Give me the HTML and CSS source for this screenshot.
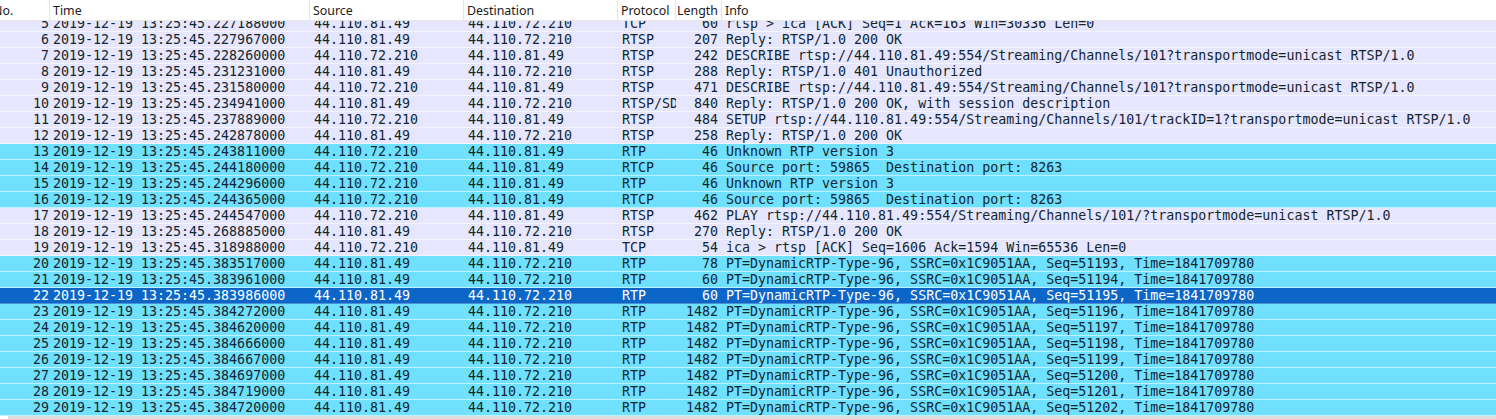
FILE: index.html
```html
<!DOCTYPE html>
<html>
<head>
<meta charset="utf-8">
<link rel="stylesheet" href="styles.css">
</head>
<body>
<div class="pane">
  <div class="head">
    <div class="hc c-no">No.</div>
    <div class="hc c-time">Time</div>
    <div class="hc c-src">Source</div>
    <div class="hc c-dst">Destination</div>
    <div class="hc c-proto">Protocol</div>
    <div class="hc c-len">Length</div>
    <div class="hc c-info">Info</div>
  </div>
  <div class="viewport">
    <div class="list">
      <div class="row tcp"><span class="c-no">5</span><span class="c-time">2019-12-19 13:25:45.227188000</span><span class="c-src">44.110.81.49</span><span class="c-dst">44.110.72.210</span><span class="c-proto">TCP</span><span class="c-len">60</span><span class="c-info">rtsp &gt; ica [ACK] Seq=1 Ack=163 Win=30336 Len=0</span></div>
      <div class="row tcp"><span class="c-no">6</span><span class="c-time">2019-12-19 13:25:45.227967000</span><span class="c-src">44.110.81.49</span><span class="c-dst">44.110.72.210</span><span class="c-proto">RTSP</span><span class="c-len">207</span><span class="c-info">Reply: RTSP/1.0 200 OK</span></div>
      <div class="row tcp"><span class="c-no">7</span><span class="c-time">2019-12-19 13:25:45.228260000</span><span class="c-src">44.110.72.210</span><span class="c-dst">44.110.81.49</span><span class="c-proto">RTSP</span><span class="c-len">242</span><span class="c-info">DESCRIBE rtsp://44.110.81.49:554/Streaming/Channels/101?transportmode=unicast RTSP/1.0</span></div>
      <div class="row tcp"><span class="c-no">8</span><span class="c-time">2019-12-19 13:25:45.231231000</span><span class="c-src">44.110.81.49</span><span class="c-dst">44.110.72.210</span><span class="c-proto">RTSP</span><span class="c-len">288</span><span class="c-info">Reply: RTSP/1.0 401 Unauthorized</span></div>
      <div class="row tcp"><span class="c-no">9</span><span class="c-time">2019-12-19 13:25:45.231580000</span><span class="c-src">44.110.72.210</span><span class="c-dst">44.110.81.49</span><span class="c-proto">RTSP</span><span class="c-len">471</span><span class="c-info">DESCRIBE rtsp://44.110.81.49:554/Streaming/Channels/101?transportmode=unicast RTSP/1.0</span></div>
      <div class="row tcp"><span class="c-no">10</span><span class="c-time">2019-12-19 13:25:45.234941000</span><span class="c-src">44.110.81.49</span><span class="c-dst">44.110.72.210</span><span class="c-proto">RTSP/SDP</span><span class="c-len">840</span><span class="c-info">Reply: RTSP/1.0 200 OK, with session description</span></div>
      <div class="row tcp"><span class="c-no">11</span><span class="c-time">2019-12-19 13:25:45.237889000</span><span class="c-src">44.110.72.210</span><span class="c-dst">44.110.81.49</span><span class="c-proto">RTSP</span><span class="c-len">484</span><span class="c-info">SETUP rtsp://44.110.81.49:554/Streaming/Channels/101/trackID=1?transportmode=unicast RTSP/1.0</span></div>
      <div class="row tcp"><span class="c-no">12</span><span class="c-time">2019-12-19 13:25:45.242878000</span><span class="c-src">44.110.81.49</span><span class="c-dst">44.110.72.210</span><span class="c-proto">RTSP</span><span class="c-len">258</span><span class="c-info">Reply: RTSP/1.0 200 OK</span></div>
      <div class="row udp"><span class="c-no">13</span><span class="c-time">2019-12-19 13:25:45.243811000</span><span class="c-src">44.110.72.210</span><span class="c-dst">44.110.81.49</span><span class="c-proto">RTP</span><span class="c-len">46</span><span class="c-info">Unknown RTP version 3</span></div>
      <div class="row udp"><span class="c-no">14</span><span class="c-time">2019-12-19 13:25:45.244180000</span><span class="c-src">44.110.72.210</span><span class="c-dst">44.110.81.49</span><span class="c-proto">RTCP</span><span class="c-len">46</span><span class="c-info">Source port: 59865  Destination port: 8263</span></div>
      <div class="row udp"><span class="c-no">15</span><span class="c-time">2019-12-19 13:25:45.244296000</span><span class="c-src">44.110.72.210</span><span class="c-dst">44.110.81.49</span><span class="c-proto">RTP</span><span class="c-len">46</span><span class="c-info">Unknown RTP version 3</span></div>
      <div class="row udp"><span class="c-no">16</span><span class="c-time">2019-12-19 13:25:45.244365000</span><span class="c-src">44.110.72.210</span><span class="c-dst">44.110.81.49</span><span class="c-proto">RTCP</span><span class="c-len">46</span><span class="c-info">Source port: 59865  Destination port: 8263</span></div>
      <div class="row tcp"><span class="c-no">17</span><span class="c-time">2019-12-19 13:25:45.244547000</span><span class="c-src">44.110.72.210</span><span class="c-dst">44.110.81.49</span><span class="c-proto">RTSP</span><span class="c-len">462</span><span class="c-info">PLAY rtsp://44.110.81.49:554/Streaming/Channels/101/?transportmode=unicast RTSP/1.0</span></div>
      <div class="row tcp"><span class="c-no">18</span><span class="c-time">2019-12-19 13:25:45.268885000</span><span class="c-src">44.110.81.49</span><span class="c-dst">44.110.72.210</span><span class="c-proto">RTSP</span><span class="c-len">270</span><span class="c-info">Reply: RTSP/1.0 200 OK</span></div>
      <div class="row tcp"><span class="c-no">19</span><span class="c-time">2019-12-19 13:25:45.318988000</span><span class="c-src">44.110.72.210</span><span class="c-dst">44.110.81.49</span><span class="c-proto">TCP</span><span class="c-len">54</span><span class="c-info">ica &gt; rtsp [ACK] Seq=1606 Ack=1594 Win=65536 Len=0</span></div>
      <div class="row udp"><span class="c-no">20</span><span class="c-time">2019-12-19 13:25:45.383517000</span><span class="c-src">44.110.81.49</span><span class="c-dst">44.110.72.210</span><span class="c-proto">RTP</span><span class="c-len">78</span><span class="c-info">PT=DynamicRTP-Type-96, SSRC=0x1C9051AA, Seq=51193, Time=1841709780</span></div>
      <div class="row udp"><span class="c-no">21</span><span class="c-time">2019-12-19 13:25:45.383961000</span><span class="c-src">44.110.81.49</span><span class="c-dst">44.110.72.210</span><span class="c-proto">RTP</span><span class="c-len">60</span><span class="c-info">PT=DynamicRTP-Type-96, SSRC=0x1C9051AA, Seq=51194, Time=1841709780</span></div>
      <div class="row sel"><span class="c-no">22</span><span class="c-time">2019-12-19 13:25:45.383986000</span><span class="c-src">44.110.81.49</span><span class="c-dst">44.110.72.210</span><span class="c-proto">RTP</span><span class="c-len">60</span><span class="c-info">PT=DynamicRTP-Type-96, SSRC=0x1C9051AA, Seq=51195, Time=1841709780</span></div>
      <div class="row udp"><span class="c-no">23</span><span class="c-time">2019-12-19 13:25:45.384272000</span><span class="c-src">44.110.81.49</span><span class="c-dst">44.110.72.210</span><span class="c-proto">RTP</span><span class="c-len">1482</span><span class="c-info">PT=DynamicRTP-Type-96, SSRC=0x1C9051AA, Seq=51196, Time=1841709780</span></div>
      <div class="row udp"><span class="c-no">24</span><span class="c-time">2019-12-19 13:25:45.384620000</span><span class="c-src">44.110.81.49</span><span class="c-dst">44.110.72.210</span><span class="c-proto">RTP</span><span class="c-len">1482</span><span class="c-info">PT=DynamicRTP-Type-96, SSRC=0x1C9051AA, Seq=51197, Time=1841709780</span></div>
      <div class="row udp"><span class="c-no">25</span><span class="c-time">2019-12-19 13:25:45.384666000</span><span class="c-src">44.110.81.49</span><span class="c-dst">44.110.72.210</span><span class="c-proto">RTP</span><span class="c-len">1482</span><span class="c-info">PT=DynamicRTP-Type-96, SSRC=0x1C9051AA, Seq=51198, Time=1841709780</span></div>
      <div class="row udp"><span class="c-no">26</span><span class="c-time">2019-12-19 13:25:45.384667000</span><span class="c-src">44.110.81.49</span><span class="c-dst">44.110.72.210</span><span class="c-proto">RTP</span><span class="c-len">1482</span><span class="c-info">PT=DynamicRTP-Type-96, SSRC=0x1C9051AA, Seq=51199, Time=1841709780</span></div>
      <div class="row udp"><span class="c-no">27</span><span class="c-time">2019-12-19 13:25:45.384697000</span><span class="c-src">44.110.81.49</span><span class="c-dst">44.110.72.210</span><span class="c-proto">RTP</span><span class="c-len">1482</span><span class="c-info">PT=DynamicRTP-Type-96, SSRC=0x1C9051AA, Seq=51200, Time=1841709780</span></div>
      <div class="row udp"><span class="c-no">28</span><span class="c-time">2019-12-19 13:25:45.384719000</span><span class="c-src">44.110.81.49</span><span class="c-dst">44.110.72.210</span><span class="c-proto">RTP</span><span class="c-len">1482</span><span class="c-info">PT=DynamicRTP-Type-96, SSRC=0x1C9051AA, Seq=51201, Time=1841709780</span></div>
      <div class="row udp"><span class="c-no">29</span><span class="c-time">2019-12-19 13:25:45.384720000</span><span class="c-src">44.110.81.49</span><span class="c-dst">44.110.72.210</span><span class="c-proto">RTP</span><span class="c-len">1482</span><span class="c-info">PT=DynamicRTP-Type-96, SSRC=0x1C9051AA, Seq=51202, Time=1841709780</span></div>
    </div>
  </div>
  <div class="hscroll"><div class="thumb"></div></div>
</div>
</body>
</html>
```

FILE: styles.css
```css
html, body {
  margin: 0;
  padding: 0;
  background: #ffffff;
}

.pane {
  width: 1496px;
  height: 419px;
  overflow: hidden;
  display: flex;
  flex-direction: column;
  background: #ffffff;
}

.head,
.row {
  display: grid;
  grid-template-columns: 50px 260px 154px 154px 58px 46px 1fr;
}

.head {
  height: 20px;
  flex: none;
  background: #ffffff;
  border-bottom: 1px solid #e6e6e6;
  font-family: "Noto Sans", "Open Sans", sans-serif;
  font-size: 12.4px;
  color: #1a1a1a;
}

.hc {
  display: flex;
  align-items: center;
  padding-left: 3px;
  padding-top: 1px;
  border-right: 1px solid #e5e5e5;
  white-space: nowrap;
  overflow: hidden;
}

.hc.c-no {
  padding-left: 0;
  margin-left: -7px;
  padding-right: 0;
}

.hc.c-len {
  padding-left: 1px;
}

.hc.c-info {
  border-right: none;
}

.viewport {
  flex: 1;
  overflow: hidden;
}

.list {
  margin-top: -5px;
}

.row {
  height: 16px;
  box-sizing: border-box;
  border-bottom: 1px solid rgba(255, 255, 255, 0.55);
  font-family: "DejaVu Sans Mono", "Liberation Mono", monospace;
  font-size: 13.3px;
  line-height: 15px;
  color: #12272e;
}

.row span {
  white-space: pre;
  overflow: hidden;
}

.row .c-no {
  text-align: right;
  padding-right: 1px;
}

.row .c-time {
  padding-left: 3px;
}

.row .c-src,
.row .c-dst {
  padding-left: 4px;
}

.row .c-proto {
  padding-left: 4px;
}

.row .c-len {
  text-align: right;
  padding-right: 4px;
}

.row .c-info {
  padding-left: 4px;
}

.tcp {
  background: #e7e6ff;
}

.udp {
  background: #70e0ff;
}

.sel {
  background: #0b66c8;
  color: #ffffff;
  border-bottom-color: #4f8fd8;
}

.hscroll {
  height: 3px;
  flex: none;
  display: flex;
  background: #ffffff;
}

.thumb {
  margin-left: 8px;
  flex: 1;
  background: #dcdcdc;
}
```
